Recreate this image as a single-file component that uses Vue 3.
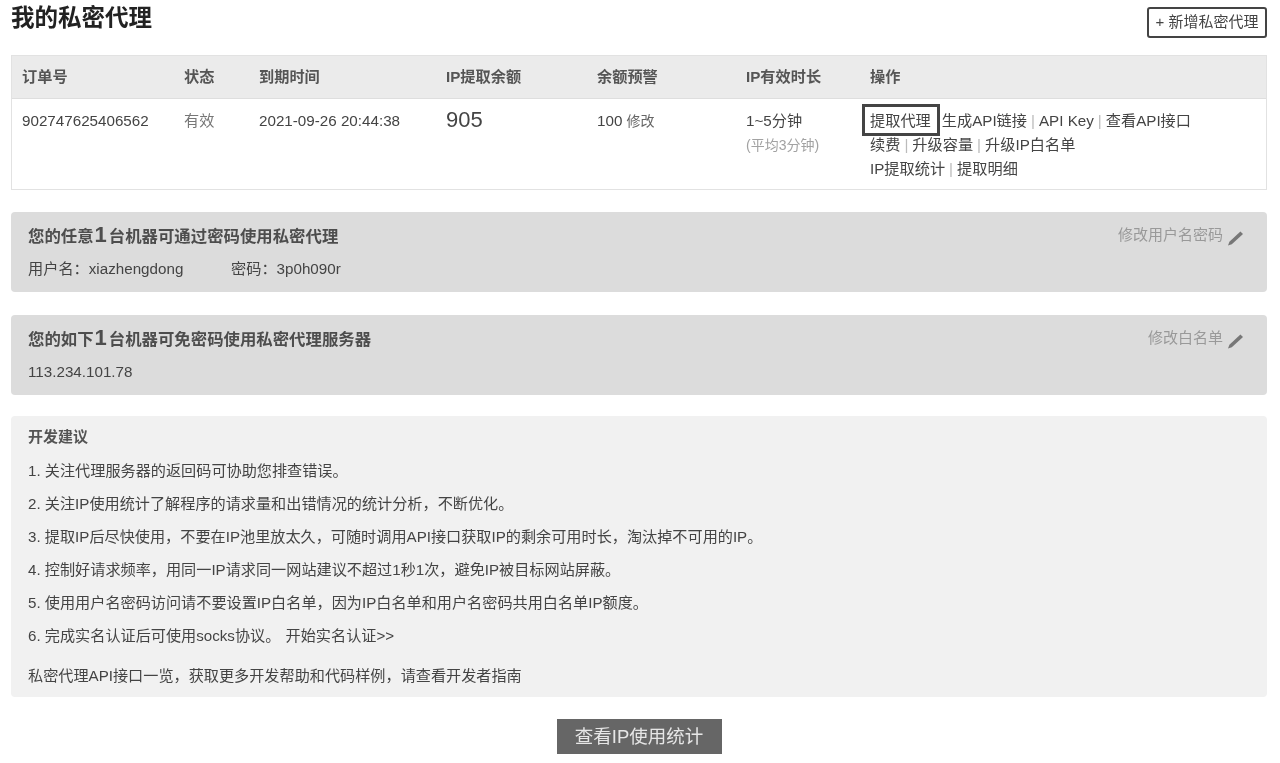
<script setup>
const columns = ['订单号', '状态', '到期时间', 'IP提取余额', '余额预警', 'IP有效时长', '操作']
const tips = [
  '1. 关注代理服务器的返回码可协助您排查错误。',
  '2. 关注IP使用统计了解程序的请求量和出错情况的统计分析，不断优化。',
  '3. 提取IP后尽快使用，不要在IP池里放太久，可随时调用API接口获取IP的剩余可用时长，淘汰掉不可用的IP。',
  '4. 控制好请求频率，用同一IP请求同一网站建议不超过1秒1次，避免IP被目标网站屏蔽。',
  '5. 使用用户名密码访问请不要设置IP白名单，因为IP白名单和用户名密码共用白名单IP额度。',
]
</script>

<template>
  <div class="page">
    <header class="top">
      <h1>我的私密代理</h1>
      <a class="add">+ 新增私密代理</a>
    </header>

    <section class="table">
      <div class="row head">
        <div v-for="c in columns" :key="c">{{ c }}</div>
      </div>
      <div class="row body">
        <div>902747625406562</div>
        <div class="muted">有效</div>
        <div>2021-09-26 20:44:38</div>
        <div class="balance">905</div>
        <div>100 <span class="small">修改</span></div>
        <div>
          <div class="line">1~5分钟</div>
          <div class="line avg">(平均3分钟)</div>
        </div>
        <div class="ops">
          <div class="line"><span class="marked">提取代理</span><i class="gap"></i>生成API链接<i>|</i>API Key<i>|</i>查看API接口</div>
          <div class="line">续费<i>|</i>升级容量<i>|</i>升级IP白名单</div>
          <div class="line">IP提取统计<i>|</i>提取明细</div>
        </div>
      </div>
    </section>

    <section class="panel">
      <div class="panel-top">
        <h2>您的任意<b>1</b>台机器可通过密码使用私密代理</h2>
        <a class="edit">修改用户名密码
          <svg viewBox="0 0 16 16" width="16" height="16"><path d="M0 15.5l1.4-3.7L12.4 1.6l2.6 2.4L3.8 14.2z" fill="#777"/></svg>
        </a>
      </div>
      <p><span class="user">用户名：xiazhengdong</span>密码：3p0h090r</p>
    </section>

    <section class="panel">
      <div class="panel-top">
        <h2>您的如下<b>1</b>台机器可免密码使用私密代理服务器</h2>
        <a class="edit">修改白名单
          <svg viewBox="0 0 16 16" width="16" height="16"><path d="M0 15.5l1.4-3.7L12.4 1.6l2.6 2.4L3.8 14.2z" fill="#777"/></svg>
        </a>
      </div>
      <p>113.234.101.78</p>
    </section>

    <section class="tips">
      <h3>开发建议</h3>
      <p v-for="t in tips" :key="t">{{ t }}</p>
      <p>6. 完成实名认证后可使用socks协议。 <span class="cert">开始实名认证&gt;&gt;</span></p>
      <p class="foot">私密代理API接口一览，获取更多开发帮助和代码样例，请查看开发者指南</p>
    </section>

    <div class="cta"><a>查看IP使用统计</a></div>
  </div>
</template>

<style scoped>
.page {
  width: 1280px;
  height: 763px;
  overflow: hidden;
  box-sizing: border-box;
  padding: 0 13px 0 11px;
  background: #fff;
  color: #444;
  font: 15.2px/24px "Liberation Sans", "Noto Sans CJK SC", sans-serif;
  filter: blur(0.55px);
}
.top {
  display: flex;
  justify-content: space-between;
  align-items: flex-start;
  height: 55px;
  padding-top: 7px;
  box-sizing: border-box;
}
h1 {
  margin: -4px 0 0;
  font-size: 23.5px;
  line-height: 30px;
  color: #222;
}
.add {
  width: 120px;
  height: 31px;
  box-sizing: border-box;
  border: 2px solid #444;
  border-radius: 3px;
  font-size: 15px;
  line-height: 26px;
  text-align: center;
}
.table {
  border: 1px solid #e2e2e2;
}
.row {
  display: grid;
  grid-template-columns: 162px 75px 187px 151px 149px 124px 1fr;
  padding-left: 10px;
}
.head {
  height: 42px;
  line-height: 42px;
  background: #ebebeb;
  border-bottom: 1px solid #dedede;
  font-weight: bold;
  color: #555;
}
.body {
  height: 90px;
  padding-top: 10px;
  box-sizing: border-box;
}
.line {
  height: 24px;
}
.muted {
  color: #777;
}
.balance {
  font-size: 22px;
  line-height: 22px;
}
.small {
  font-size: 14px;
  color: #666;
}
.avg {
  font-size: 14px;
  color: #a2a2a2;
}
.ops i {
  font-style: normal;
  color: #bbb;
  margin: 0 4px;
}
.ops i.gap {
  margin: 0 0 0 11px;
}
.marked {
  position: relative;
}
.marked::after {
  content: "";
  position: absolute;
  left: -8px;
  right: -9px;
  top: -8px;
  bottom: -7px;
  border: 3px solid #444;
}
.panel {
  margin-top: 22px;
  height: 80px;
  box-sizing: border-box;
  padding: 10px 17px;
  background: #dcdcdc;
  border-radius: 4px;
}
.panel + .panel {
  margin-top: 23px;
}
.panel-top {
  display: flex;
  justify-content: space-between;
  height: 30px;
}
h2 {
  margin: 0;
  font-size: 16.4px;
  line-height: 26px;
  color: #4d4d4d;
}
h2 b {
  font-size: 22px;
  margin: 0 2px 0 1px;
}
.edit {
  display: flex;
  align-items: flex-start;
  gap: 5px;
  padding-top: 1px;
  font-size: 15px;
  color: #999;
  line-height: 24px;
  margin-right: 6px;
}
.edit svg {
  margin-top: 7px;
}
.panel p {
  margin: 5px 0 0;
}
.user {
  display: inline-block;
  width: 203px;
}
.tips {
  margin-top: 21px;
  height: 281px;
  box-sizing: border-box;
  padding: 9px 17px;
  background: #f1f1f1;
  border-radius: 4px;
  font-size: 15.15px;
}
h3 {
  margin: 0 0 10px;
  font-size: 15px;
  line-height: 24px;
  color: #555;
}
.tips p {
  margin: 0;
  height: 33px;
  line-height: 24px;
}
.tips .foot {
  margin-top: 7px;
}
.cert {
  margin-left: 1px;
}
.cta {
  display: flex;
  justify-content: center;
  margin-top: 22px;
}
.cta a {
  width: 165px;
  height: 35px;
  background: #666;
  color: #e6e6e6;
  font-size: 18.5px;
  line-height: 35px;
  text-align: center;
}
</style>
